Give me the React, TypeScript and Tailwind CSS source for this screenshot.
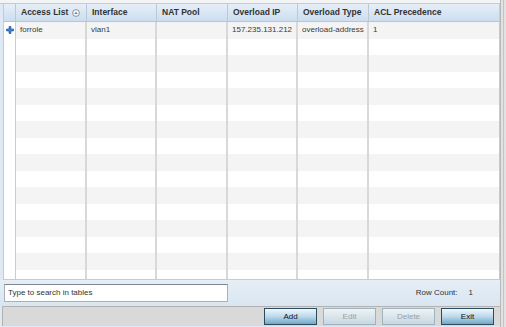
import React from 'react';

const font = { fontFamily: '"Liberation Sans", Arial, sans-serif' };

const columns = ['Access List', 'Interface', 'NAT Pool', 'Overload IP', 'Overload Type', 'ACL Precedence'];
const rows = [['forrole', 'vlan1', '', '157.235.131.212', 'overload-address', '1']];

const SortIcon = () => (
    <svg width="8" height="8" viewBox="0 0 8 8" className="ml-[4px]">
        <circle cx="4" cy="4" r="3.4" fill="#f4f8fb" stroke="#6d7b86" strokeWidth="0.8" />
        <path d="M2.3 4.8 L4 2.9 L5.7 4.8 Z" fill="#4a5660" />
    </svg>
);

const PlusIcon = () => (
    <svg width="8" height="8" viewBox="0 0 8 8">
        <path d="M3 0.5h2v2.5h2.5v2H5v2.5H3V5H0.5V3H3z" fill="#3a7fd8" stroke="#1d4e9a" strokeWidth="0.6" />
    </svg>
);

const Button = ({ label, disabled }: { label: string; disabled?: boolean }) => (
    <div
        className={
            disabled
                ? 'w-[53px] h-[17px] flex items-center justify-center text-[8px] text-[#9aa3a8] border border-[#9fb3bf] bg-gradient-to-b from-[#eef3f6] to-[#c6d8e2]'
                : 'w-[53px] h-[17px] flex items-center justify-center text-[8px] text-[#111] border border-[#2c4b5e] bg-gradient-to-b from-[#eef6fb] via-[#bcd9ea] to-[#6fa8c8]'
        }
    >
        {label}
    </div>
);

export default function App() {
    const bodyRows = Array.from({ length: 16 });
    return (
        <div style={font} className="w-[506px] h-[327px] bg-[#dfe9f3] flex overflow-hidden">
            <div className="w-[500px] flex flex-col">
                <div className="h-[4px] bg-[#f2f4f6] border-b border-[#c3ccd4]" />
                {/* Table */}
                <div className="ml-[3px] border-l border-[#a9b9c6] border-r border-b border-[#c0ccd6] bg-white h-[276px] overflow-hidden">
                    <div className="grid grid-cols-[12px_71px_70px_71px_70px_71px_1fr] h-[18px] bg-gradient-to-b from-[#e6eff8] to-[#ccdeef] border-b border-[#b4c6d6]">
                        <div className="border-r border-[#b9c9d7]" />
                        {columns.map((c, i) => (
                            <div
                                key={c}
                                className={`flex items-center pl-[5px] text-[8.5px] font-bold text-[#333] ${i < columns.length - 1 ? 'border-r border-[#b9c9d7]' : ''}`}
                            >
                                {c}
                                {i === 0 && <SortIcon />}
                            </div>
                        ))}
                    </div>
                    {bodyRows.map((_, r) => {
                        const data = rows[r];
                        return (
                            <div
                                key={r}
                                className={`grid grid-cols-[12px_71px_70px_71px_70px_71px_1fr] h-[16.5px] ${r % 2 === 0 ? 'bg-[#f4f4f4]' : 'bg-white'}`}
                            >
                                <div className="flex items-center justify-center border-r border-[#cccccc] bg-white">
                                    {data && <PlusIcon />}
                                </div>
                                {columns.map((c, i) => (
                                    <div
                                        key={c}
                                        className={`flex items-center pl-[4px] text-[8px] text-[#3a3a3a] whitespace-nowrap overflow-hidden ${i < columns.length - 1 ? 'border-r-2 border-[#d8d8d8]' : ''}`}
                                    >
                                        {data ? data[i] : ''}
                                    </div>
                                ))}
                            </div>
                        );
                    })}
                </div>
                {/* Search row */}
                <div className="h-[26px] flex items-center pl-[4px] pr-[27px] bg-gradient-to-b from-[#e6eef6] to-[#d9e6f1]">
                    <div className="w-[224px] h-[18px] bg-white border border-[#a8b0b8] border-t-[#7f8890] flex items-center pl-[3px] text-[8px] text-[#333]">
                        Type to search in tables
                    </div>
                    <div className="ml-auto flex items-center text-[8px] text-[#333]">
                        <span>Row Count:</span>
                        <span className="ml-[11px]">1</span>
                    </div>
                </div>
                {/* Bottom buttons */}
                <div className="ml-[2px] h-[20px] bg-[#d9d9d9] border-t border-l border-[#b2b2b2] flex items-center justify-end pr-[6px] gap-[6px]">
                    <Button label="Add" />
                    <Button label="Edit" disabled />
                    <Button label="Delete" disabled />
                    <Button label="Exit" />
                </div>
            </div>
            <div className="flex-1 bg-[#e2e2e2] border-l border-[#b8b8b8] flex">
                <div className="ml-[2px] w-px bg-[#c4c4c4]" />
            </div>
        </div>
    );
}
